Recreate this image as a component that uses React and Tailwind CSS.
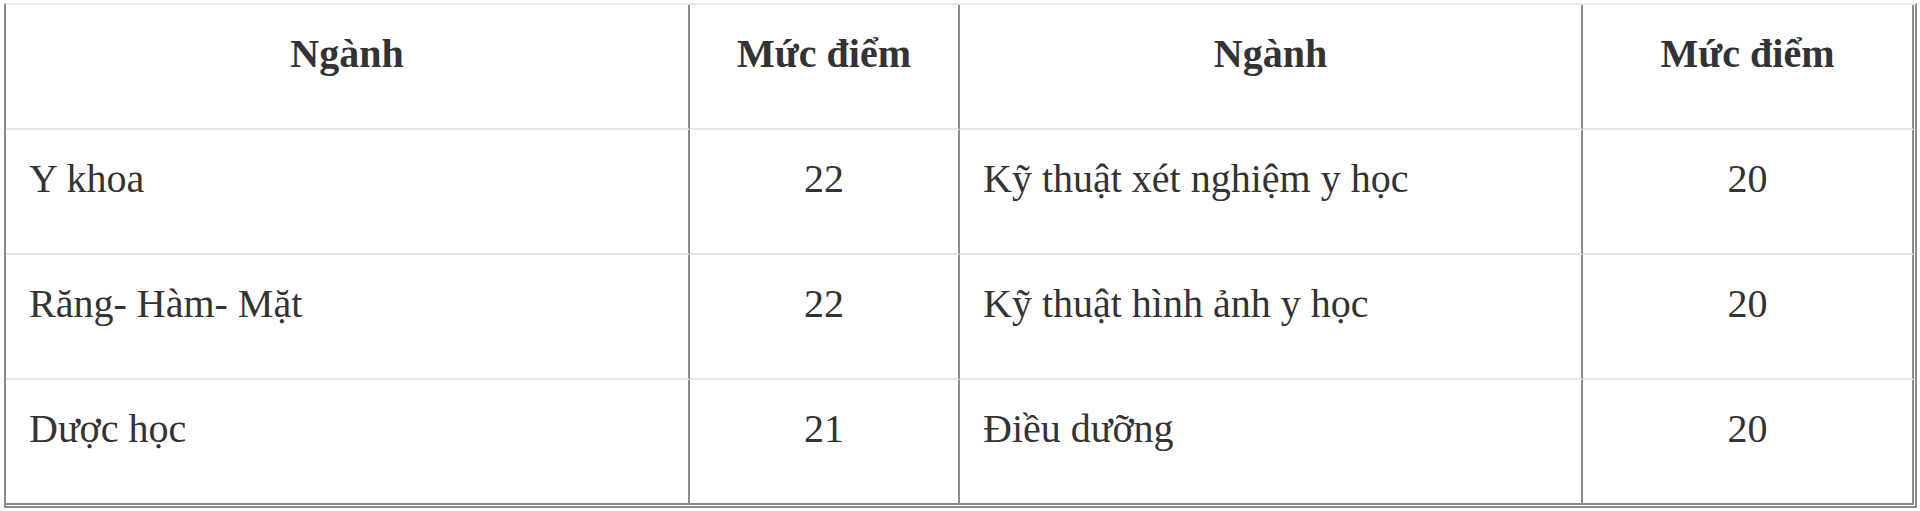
const rows = [
  ['Y khoa', '22', 'Kỹ thuật xét nghiệm y học', '20'],
  ['Răng- Hàm- Mặt', '22', 'Kỹ thuật hình ảnh y học', '20'],
  ['Dược học', '21', 'Điều dưỡng', '20'],
]

function Cell({ children, head, center, last }) {
  return (
    <div
      className={`h-[125px] border-r-2 border-r-[#8a8a8a] border-b-2 pt-[29px] leading-[40px] ${
        last ? 'border-b-[#8a8a8a]' : 'border-b-[#e6e6e6]'
      } ${head ? 'font-bold text-center' : ''} ${center ? 'text-center' : 'pl-[23px]'}`}
    >
      {children}
    </div>
  )
}

export default function App() {
  return (
    <div className="min-h-screen bg-white pt-[3px] pl-[4px]">
      <div
        className="w-[1913px] border-t-2 border-t-[#e6e6e6] border-l-2 border-l-[#8a8a8a] border-r-2 border-r-[#8a8a8a] border-b-2 border-b-[#8a8a8a] pr-px pb-px text-[40px] text-[#333333]"
        style={{ fontFamily: '"Liberation Serif", "Times New Roman", serif' }}
      >
        <div className="grid grid-cols-[684px_270px_623px_331px]">
          <Cell head center>Ngành</Cell>
          <Cell head center>Mức điểm</Cell>
          <Cell head center>Ngành</Cell>
          <Cell head center>Mức điểm</Cell>
          {rows.map((r, i) => {
            const last = i === rows.length - 1
            return [
              <Cell key={`${i}a`} last={last}>{r[0]}</Cell>,
              <Cell key={`${i}b`} center last={last}>{r[1]}</Cell>,
              <Cell key={`${i}c`} last={last}>{r[2]}</Cell>,
              <Cell key={`${i}d`} center last={last}>{r[3]}</Cell>,
            ]
          })}
        </div>
      </div>
    </div>
  )
}
